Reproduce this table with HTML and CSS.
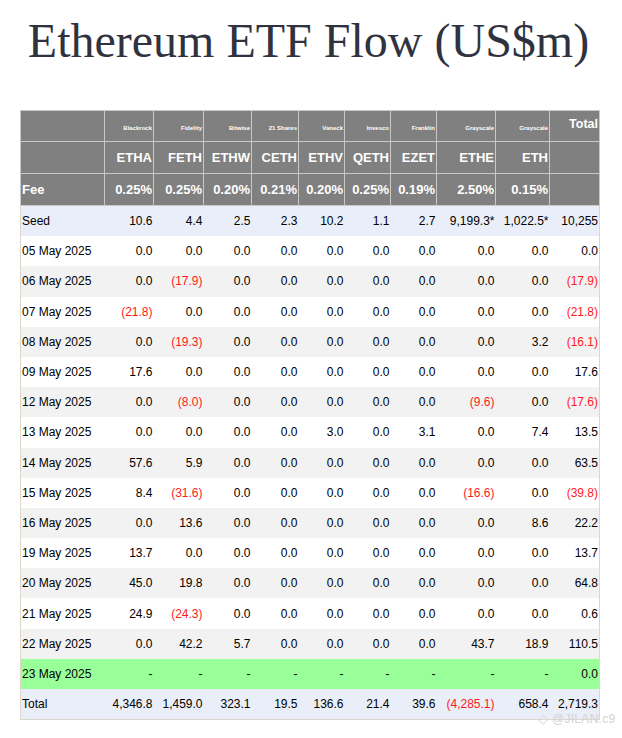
FILE: index.html
```html
<!DOCTYPE html>
<html>
<head>
<meta charset="utf-8">
<link rel="stylesheet" href="styles.css">
</head>
<body>
<h1 class="title">Ethereum ETF Flow (US$m)</h1>
<table class="flow">
  <colgroup>
    <col class="c-date"><col class="c49"><col class="c50"><col class="c48"><col class="c47"><col class="c46"><col class="c46"><col class="c46"><col class="c59"><col class="c54"><col class="c50">
  </colgroup>
  <thead>
    <tr class="h-issuer">
      <th></th>
      <th class="issuer">Blackrock</th>
      <th class="issuer">Fidelity</th>
      <th class="issuer">Bitwise</th>
      <th class="issuer">21 Shares</th>
      <th class="issuer">Vaneck</th>
      <th class="issuer">Invesco</th>
      <th class="issuer">Franklin</th>
      <th class="issuer">Grayscale</th>
      <th class="issuer">Grayscale</th>
      <th class="total-head">Total</th>
    </tr>
    <tr class="h-ticker">
      <th></th><th>ETHA</th><th>FETH</th><th>ETHW</th><th>CETH</th><th>ETHV</th><th>QETH</th><th>EZET</th><th>ETHE</th><th>ETH</th><th></th>
    </tr>
    <tr class="h-fee">
      <th class="label">Fee</th><th>0.25%</th><th>0.25%</th><th>0.20%</th><th>0.21%</th><th>0.20%</th><th>0.25%</th><th>0.19%</th><th>2.50%</th><th>0.15%</th><th></th>
    </tr>
  </thead>
  <tbody>
    <tr class="r-seed"><td class="label">Seed</td><td>10.6</td><td>4.4</td><td>2.5</td><td>2.3</td><td>10.2</td><td>1.1</td><td>2.7</td><td>9,199.3*</td><td>1,022.5*</td><td>10,255</td></tr>
    <tr class="r-white"><td class="label">05 May 2025</td><td>0.0</td><td>0.0</td><td>0.0</td><td>0.0</td><td>0.0</td><td>0.0</td><td>0.0</td><td>0.0</td><td>0.0</td><td>0.0</td></tr>
    <tr class="r-grey"><td class="label">06 May 2025</td><td>0.0</td><td class="neg">(17.9)</td><td>0.0</td><td>0.0</td><td>0.0</td><td>0.0</td><td>0.0</td><td>0.0</td><td>0.0</td><td class="neg">(17.9)</td></tr>
    <tr class="r-white"><td class="label">07 May 2025</td><td class="neg">(21.8)</td><td>0.0</td><td>0.0</td><td>0.0</td><td>0.0</td><td>0.0</td><td>0.0</td><td>0.0</td><td>0.0</td><td class="neg">(21.8)</td></tr>
    <tr class="r-grey"><td class="label">08 May 2025</td><td>0.0</td><td class="neg">(19.3)</td><td>0.0</td><td>0.0</td><td>0.0</td><td>0.0</td><td>0.0</td><td>0.0</td><td>3.2</td><td class="neg">(16.1)</td></tr>
    <tr class="r-white"><td class="label">09 May 2025</td><td>17.6</td><td>0.0</td><td>0.0</td><td>0.0</td><td>0.0</td><td>0.0</td><td>0.0</td><td>0.0</td><td>0.0</td><td>17.6</td></tr>
    <tr class="r-grey"><td class="label">12 May 2025</td><td>0.0</td><td class="neg">(8.0)</td><td>0.0</td><td>0.0</td><td>0.0</td><td>0.0</td><td>0.0</td><td class="neg">(9.6)</td><td>0.0</td><td class="neg">(17.6)</td></tr>
    <tr class="r-white"><td class="label">13 May 2025</td><td>0.0</td><td>0.0</td><td>0.0</td><td>0.0</td><td>3.0</td><td>0.0</td><td>3.1</td><td>0.0</td><td>7.4</td><td>13.5</td></tr>
    <tr class="r-grey"><td class="label">14 May 2025</td><td>57.6</td><td>5.9</td><td>0.0</td><td>0.0</td><td>0.0</td><td>0.0</td><td>0.0</td><td>0.0</td><td>0.0</td><td>63.5</td></tr>
    <tr class="r-white"><td class="label">15 May 2025</td><td>8.4</td><td class="neg">(31.6)</td><td>0.0</td><td>0.0</td><td>0.0</td><td>0.0</td><td>0.0</td><td class="neg">(16.6)</td><td>0.0</td><td class="neg">(39.8)</td></tr>
    <tr class="r-grey"><td class="label">16 May 2025</td><td>0.0</td><td>13.6</td><td>0.0</td><td>0.0</td><td>0.0</td><td>0.0</td><td>0.0</td><td>0.0</td><td>8.6</td><td>22.2</td></tr>
    <tr class="r-white"><td class="label">19 May 2025</td><td>13.7</td><td>0.0</td><td>0.0</td><td>0.0</td><td>0.0</td><td>0.0</td><td>0.0</td><td>0.0</td><td>0.0</td><td>13.7</td></tr>
    <tr class="r-grey"><td class="label">20 May 2025</td><td>45.0</td><td>19.8</td><td>0.0</td><td>0.0</td><td>0.0</td><td>0.0</td><td>0.0</td><td>0.0</td><td>0.0</td><td>64.8</td></tr>
    <tr class="r-white"><td class="label">21 May 2025</td><td>24.9</td><td class="neg">(24.3)</td><td>0.0</td><td>0.0</td><td>0.0</td><td>0.0</td><td>0.0</td><td>0.0</td><td>0.0</td><td>0.6</td></tr>
    <tr class="r-grey"><td class="label">22 May 2025</td><td>0.0</td><td>42.2</td><td>5.7</td><td>0.0</td><td>0.0</td><td>0.0</td><td>0.0</td><td>43.7</td><td>18.9</td><td>110.5</td></tr>
    <tr class="r-green"><td class="label">23 May 2025</td><td>-</td><td>-</td><td>-</td><td>-</td><td>-</td><td>-</td><td>-</td><td>-</td><td>-</td><td>0.0</td></tr>
    <tr class="r-total"><td class="label">Total</td><td>4,346.8</td><td>1,459.0</td><td>323.1</td><td>19.5</td><td>136.6</td><td>21.4</td><td>39.6</td><td class="neg">(4,285.1)</td><td>658.4</td><td>2,719.3</td></tr>
  </tbody>
</table>
<div class="watermark"><span class="wm-icon">&#9671;</span> @JILAN.c9</div>
</body>
</html>
```
FILE: styles.css
```css
html, body {
  margin: 0;
  padding: 0;
  background: #ffffff;
}
body {
  position: relative;
  width: 622px;
  height: 738px;
  overflow: hidden;
}
.title {
  margin: 13px 0 0;
  padding-right: 5px;
  font-family: "Liberation Serif", "Times New Roman", serif;
  font-weight: normal;
  font-size: 48px;
  line-height: 56px;
  color: #30333f;
  text-align: center;
}
.flow {
  margin: 41px 0 0 20px;
  width: 579px;
  table-layout: fixed;
  border-collapse: collapse;
  border: 1px solid #ddd6ca;
  font-family: "Liberation Sans", Arial, sans-serif;
  font-size: 12px;
  color: #000;
}
.c-date { width: 84px; }
.c46 { width: 46px; }
.c47 { width: 47px; }
.c48 { width: 48px; }
.c49 { width: 49px; }
.c50 { width: 50px; }
.c54 { width: 54px; }
.c59 { width: 59px; }

.flow th {
  background: #808080;
  color: #ffffff;
  border: 1px solid #c9c9c9;
  font-weight: bold;
  text-align: right;
  padding: 0 1px;
  white-space: nowrap;
}
.h-issuer { height: 31px; }
.h-issuer th {
  vertical-align: bottom;
  padding-bottom: 9px;
}
.issuer {
  font-size: 6px;
  line-height: 8px;
}
.total-head {
  font-size: 12.5px;
  line-height: 15px;
  padding-bottom: 9px;
}
.h-ticker { height: 32px; }
.h-ticker th {
  font-size: 13px;
  vertical-align: middle;
}
.h-fee { height: 32px; }
.h-fee th {
  font-size: 13px;
  vertical-align: middle;
}
.flow th.label {
  text-align: left;
}
.flow td {
  height: 30.2px;
  padding: 0 1px;
  text-align: right;
  vertical-align: middle;
  white-space: nowrap;
}
.flow td.label {
  text-align: left;
}
.flow td.neg {
  color: #ff1a1a;
}
.r-seed td, .r-total td { background: #eaeef8; }
.r-white td { background: #ffffff; }
.r-grey td { background: #f2f2f2; }
.r-green td { background: #99ff99; }

.watermark {
  position: absolute;
  left: 538px;
  top: 711px;
  font-family: "Liberation Sans", Arial, sans-serif;
  font-size: 12px;
  color: #d4d4d4;
  letter-spacing: 0.3px;
}
.wm-icon {
  font-size: 13px;
}
```
